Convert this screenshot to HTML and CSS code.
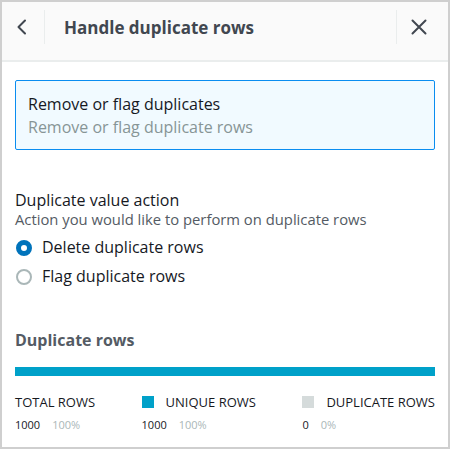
FILE: index.html
```html
<!DOCTYPE html>
<html>
<head>
<meta charset="utf-8">
<link rel="stylesheet" href="styles.css">
</head>
<body>
<div class="frame">
  <header class="header">
    <button class="icon-btn back" aria-label="Back">
      <svg width="12" height="16" viewBox="0 0 12 16"><path d="M9 1.5 L2.5 8 L9 14.5" fill="none" stroke="#414750" stroke-width="2" stroke-linecap="round" stroke-linejoin="round"/></svg>
    </button>
    <div class="divider"></div>
    <h1 class="title">Handle duplicate rows</h1>
    <div class="divider"></div>
    <button class="icon-btn close" aria-label="Close">
      <svg width="16" height="16" viewBox="0 0 16 16"><path d="M1.5 1.5 L14.5 14.5 M14.5 1.5 L1.5 14.5" fill="none" stroke="#414750" stroke-width="2" stroke-linecap="round"/></svg>
    </button>
  </header>
  <main class="content">
    <div class="option-card">
      <div class="option-title">Remove or flag duplicates</div>
      <div class="option-desc">Remove or flag duplicate rows</div>
    </div>
    <section class="field">
      <div class="field-label">Duplicate value action</div>
      <div class="field-desc">Action you would like to perform on duplicate rows</div>
      <div class="radio-group">
        <label class="radio"><span class="radio-dot checked"></span><span>Delete duplicate rows</span></label>
        <label class="radio"><span class="radio-dot"></span><span>Flag duplicate rows</span></label>
      </div>
    </section>
    <section class="stats">
      <h2 class="stats-title">Duplicate rows</h2>
      <div class="bar"><div class="bar-fill" style="width:100%"></div></div>
      <div class="legend">
        <div class="legend-item">
          <div class="legend-label">TOTAL ROWS</div>
          <div class="legend-value"><span class="num">1000</span><span class="pct">100%</span></div>
        </div>
        <div class="legend-item">
          <div class="legend-label"><span class="swatch unique"></span>UNIQUE ROWS</div>
          <div class="legend-value"><span class="num">1000</span><span class="pct">100%</span></div>
        </div>
        <div class="legend-item">
          <div class="legend-label"><span class="swatch dup"></span>DUPLICATE ROWS</div>
          <div class="legend-value"><span class="num">0</span><span class="pct">0%</span></div>
        </div>
      </div>
    </section>
  </main>
</div>
</body>
</html>
```
FILE: styles.css
```css
* { box-sizing: border-box; }
html, body { margin: 0; padding: 0; }
body {
  width: 450px;
  height: 449px;
  font-family: "Open Sans", "Noto Sans", sans-serif;
  color: #16191f;
  background: #fff;
}
.frame {
  width: 450px;
  height: 449px;
  border: 2px solid #cfcfcf;
  background: #fff;
  display: flex;
  flex-direction: column;
}
.header {
  height: 60px;
  background: #fafafa;
  border-bottom: 2px solid #eaeded;
  display: flex;
  align-items: center;
  flex-shrink: 0;
}
.icon-btn {
  border: 0;
  background: none;
  padding: 0;
  display: flex;
  align-items: center;
  height: 100%;
  padding-bottom: 8px;
}
.back { width: 42px; padding-left: 14px; }
.close { width: 51px; padding-left: 14px; }
.divider {
  width: 1px;
  height: 34px;
  background: #eaeded;
  align-self: center;
  margin-top: -8px;
}
.title {
  flex: 1;
  margin: 0 0 8px 19px;
  font-size: 17px;
  font-weight: 700;
  color: #414750;
}
.content {
  padding: 18px 13px 0 13px;
  display: flex;
  flex-direction: column;
}
.option-card {
  height: 70px;
  border: 1px solid #0a8df0;
  border-radius: 2px;
  background: #f1faff;
  padding: 12px 12px;
}
.option-title {
  font-size: 16px;
  line-height: 22px;
  color: #16191f;
}
.option-desc {
  font-size: 16px;
  line-height: 24px;
  color: #879596;
}
.field { margin-top: 39px; }
.field-label {
  font-size: 16px;
  line-height: 22px;
  color: #16191f;
}
.field-desc {
  font-size: 14.8px;
  line-height: 17px;
  color: #545b64;
}
.radio-group {
  display: flex;
  flex-direction: column;
  margin-top: 5px;
}
.radio {
  display: flex;
  align-items: center;
  gap: 10px;
  font-size: 16px;
  line-height: 29px;
  color: #16191f;
}
.radio-dot {
  width: 16px;
  height: 16px;
  border-radius: 50%;
  border: 2px solid #aab7b8;
  background: #fff;
  flex-shrink: 0;
  margin-left: 1px;
}
.radio-dot.checked {
  border: 5px solid #0073bb;
}
.stats { margin-top: 38px; }
.stats-title {
  margin: 0;
  font-size: 16px;
  line-height: 22px;
  font-weight: 700;
  color: #545b64;
}
.bar {
  margin-top: 16px;
  height: 9px;
  background: #d5dbdb;
}
.bar-fill {
  height: 100%;
  background: #00a1c9;
}
.legend {
  display: flex;
  justify-content: space-between;
  margin-top: 17px;
}
.legend-label {
  display: flex;
  align-items: center;
  font-size: 13px;
  line-height: 18px;
  color: #16191f;
}
.swatch {
  width: 12px;
  height: 12px;
  margin-right: 12px;
}
.swatch.unique { background: #00a1c9; }
.swatch.dup { background: #d5dbdb; }
.legend-value {
  margin-top: 6px;
  font-size: 11px;
  line-height: 15px;
}
.num { color: #16191f; font-weight: 400; }
.pct { color: #aab7b8; margin-left: 12px; }
```
